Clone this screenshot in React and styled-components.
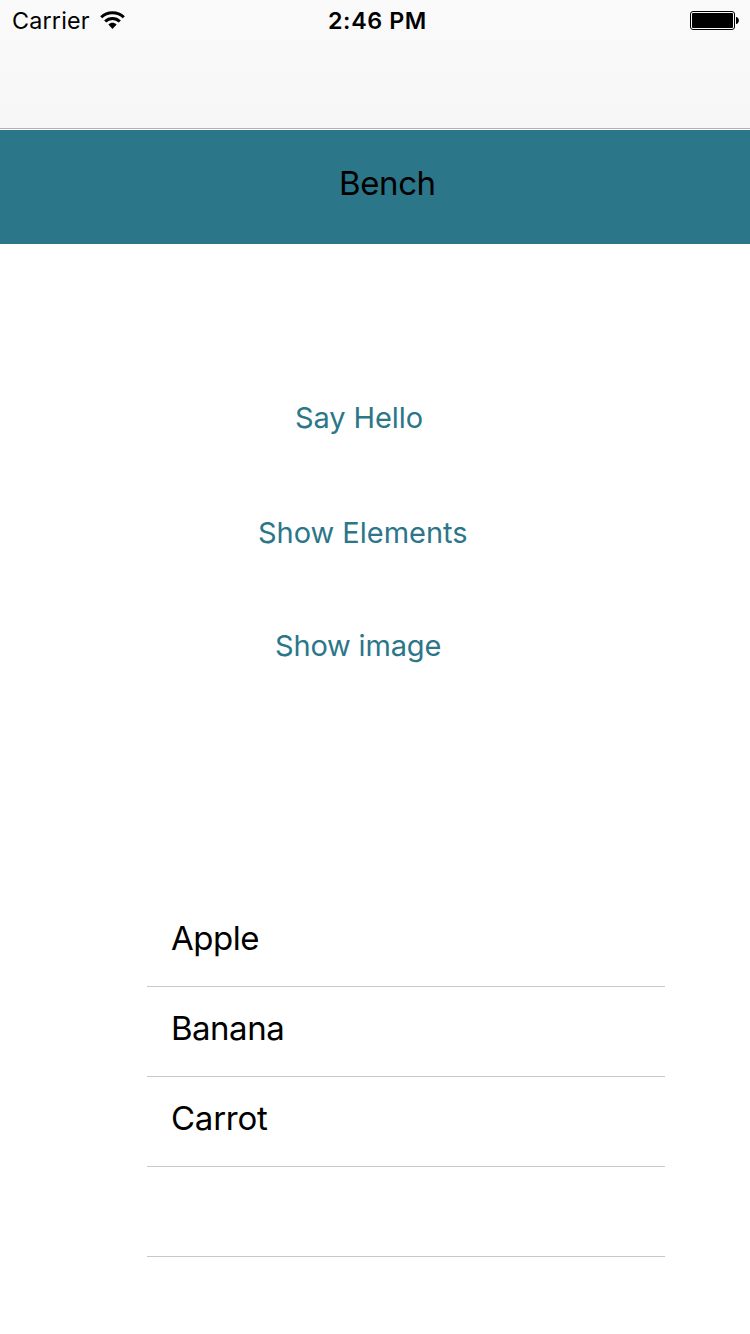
import React from "react";
import styled, { createGlobalStyle } from "styled-components";

const GlobalStyle = createGlobalStyle`
  *, *::before, *::after { box-sizing: border-box; }
  body {
    margin: 0;
    background: #fff;
    font-family: Inter, "Liberation Sans", sans-serif;
    color: #000;
  }
`;

const Screen = styled.div`
  width: 750px;
  height: 1334px;
  overflow: hidden;
  display: flex;
  flex-direction: column;
  background: #fff;
`;

const NavigationBar = styled.header`
  height: 129px;
  flex: none;
  background: linear-gradient(#fafafa, #f7f7f7);
  border-bottom: 1px solid #b2b2b2;
`;

const StatusBar = styled.div`
  height: 42px;
  padding: 0 11px 0 12px;
  display: grid;
  grid-template-columns: 316px 1fr auto;
  align-items: center;
  font-size: 23.3px;
  line-height: 42px;
`;

const Carrier = styled.div`
  display: flex;
  align-items: center;
  gap: 10px;
  height: 42px;
`;

const CarrierName = styled.span`
  width: 78px;
  white-space: nowrap;
  letter-spacing: ${(p) => p.$tracking}px;
`;

const Clock = styled.time`
  font-weight: 600;
  white-space: nowrap;
  letter-spacing: ${(p) => p.$tracking}px;
`;

const Glyph = styled.svg`
  display: block;
  flex: none;
`;

const Banner = styled.div`
  height: 114px;
  flex: none;
  margin-top: 1px;
  padding: 33px 0 0 339px;
  background: #2c768a;
`;

const BannerTitle = styled.h1`
  margin: 0;
  font-size: 33px;
  font-weight: 400;
  line-height: 40px;
  letter-spacing: ${(p) => p.$tracking}px;
`;

const Actions = styled.div`
  flex: none;
  height: 653px;
  padding-top: 153px;
  display: flex;
  flex-direction: column;
  align-items: flex-start;
`;

const ActionButton = styled.button`
  height: 41px;
  padding: 0;
  border: 0;
  background: none;
  margin: 0 0 ${(p) => p.$after || 0}px ${(p) => p.$indent}px;
  color: #2c768a;
  font: 400 29px/41px Inter, "Liberation Sans", sans-serif;
  letter-spacing: ${(p) => p.$tracking}px;
  white-space: nowrap;
`;

const List = styled.ul`
  width: 518px;
  margin: 0 0 0 147px;
  padding: 0;
  list-style: none;
`;

const ListRow = styled.li`
  height: 90px;
  padding: 21px 0 0 24px;
  border-bottom: 1px solid #c8c7cc;
  font-size: 33px;
  line-height: 40px;
  letter-spacing: ${(p) => p.$tracking || 0}px;
`;

const WifiIcon = () => (
  <Glyph width="26" height="20" viewBox="0 0 26 20" aria-label="Wi-Fi">
    <g fill="none" stroke="#000" strokeWidth="3">
      <path d="M1.2 6.2C7.4 .1 17.6 .1 23.8 6.2" />
      <path d="M5.2 10.5C9.3 6.5 15.7 6.5 19.8 10.5" />
    </g>
    <path d="M8.4 13.6C10.8 11.1 14.2 11.1 16.6 13.6L12.5 18Z" />
  </Glyph>
);

const BatteryIcon = () => (
  <Glyph width="49" height="20" viewBox="0 0 49 20" aria-label="Battery full">
    <rect x=".5" y=".5" width="44" height="18" rx="2.5" fill="none" stroke="#000" />
    <rect x="2" y="2" width="41" height="15" rx="1" />
    <path d="M46 6C49.8 6.2 49.8 12.8 46 13Z" />
  </Glyph>
);

const items = [
  { name: "Apple", tracking: -0.5 },
  { name: "Banana", tracking: -0.5 },
  { name: "Carrot", tracking: -0.25 },
  { name: "" },
];

export default function App() {
  return (
    <>
      <GlobalStyle />
      <Screen>
        <NavigationBar>
          <StatusBar>
            <Carrier>
              <CarrierName $tracking={0.2}>Carrier</CarrierName>
              <WifiIcon />
            </Carrier>
            <Clock $tracking={0.6}>2:46 PM</Clock>
            <BatteryIcon />
          </StatusBar>
        </NavigationBar>
        <Banner>
          <BannerTitle $tracking={-0.4}>Bench</BannerTitle>
        </Banner>
        <Actions>
          <ActionButton $indent={295} $after={74} $tracking={-0.1}>Say Hello</ActionButton>
          <ActionButton $indent={258} $after={72} $tracking={-0.03}>Show Elements</ActionButton>
          <ActionButton $indent={275} $tracking={-0.18}>Show image</ActionButton>
        </Actions>
        <List>
          {items.map((item, i) => (
            <ListRow key={i} $tracking={item.tracking}>{item.name}</ListRow>
          ))}
        </List>
      </Screen>
    </>
  );
}
